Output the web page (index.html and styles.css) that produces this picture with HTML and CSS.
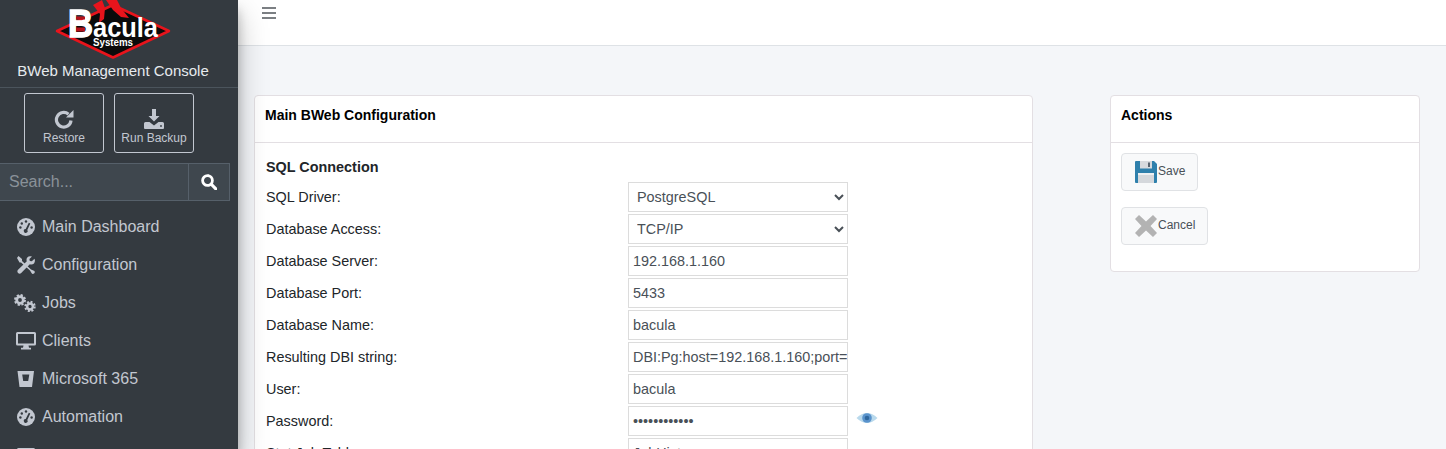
FILE: index.html
```html
<!DOCTYPE html>
<html lang="en">
<head>
<meta charset="utf-8">
<title>BWeb Management Console</title>
<link rel="stylesheet" href="styles.css">
</head>
<body>
<div class="app">
  <aside class="sidebar">
    <div class="brand">
      <svg class="logo" viewBox="0 0 116 60" width="116" height="60" aria-label="Bacula Systems">
        <path d="M2 31 L58 5 L114 31 L58 57.500 Z" fill="#0b0b0b" stroke="#e8141c" stroke-width="2.500" stroke-linejoin="round"/>
        <path d="M38 5 L47 0 L50 8 L49 19 L44 23 L45 14 Z" fill="#e8141c"/>
        <path d="M51 0 L62 0 L66 8 L74 18 L66 17 L58 10 Z" fill="#e8141c"/>
        <text class="logo-b" x="13" y="37" textLength="25" lengthAdjust="spacingAndGlyphs">B</text>
        <rect x="21" y="16.500" width="9" height="3" fill="#b3121a"/>
        <rect x="21" y="27.500" width="9" height="4" fill="#b3121a"/>
        <text class="logo-acula" x="38" y="37" textLength="65" lengthAdjust="spacingAndGlyphs">acula</text>
        <text class="logo-sys" x="38" y="46" textLength="40" lengthAdjust="spacingAndGlyphs">Systems</text>
      </svg>
      <div class="brand-title">BWeb Management Console</div>
    </div>
    <div class="quick">
      <a class="quick-btn">
        <svg class="quick-icon" viewBox="0 0 20 20" width="20" height="20"><path d="M17 11.500 A7.300 7.300 0 1 1 14.500 5.200" fill="none" stroke="#c2c7d0" stroke-width="3.200"/><path d="M19.500 1 V8.500 H12 Z" fill="#c2c7d0"/></svg>
        <span>Restore</span>
      </a>
      <a class="quick-btn">
        <svg class="quick-icon" viewBox="0 0 20 20" width="20" height="20"><path d="M8 0 H12 V7 H15.500 L10 12.500 L4.500 7 H8 Z" fill="#c2c7d0"/><path d="M0 14.500 Q0 13 1.500 13 H5.500 L10 16.500 L14.500 13 H18.500 Q20 13 20 14.500 V19 Q20 20 19 20 H1 Q0 20 0 19 Z" fill="#c2c7d0"/><circle cx="17" cy="17" r="0.900" fill="#343a40"/></svg>
        <span>Run Backup</span>
      </a>
    </div>
    <div class="search">
      <input class="search-input" type="text" placeholder="Search...">
      <button class="search-btn" type="button" aria-label="Search">
        <svg viewBox="0 0 16 16" width="16" height="16"><circle cx="6.500" cy="6.500" r="4.900" fill="none" stroke="#fff" stroke-width="2.800"/><path d="M10.200 10.200 L14.800 14.800" stroke="#fff" stroke-width="3.100" stroke-linecap="round"/></svg>
      </button>
    </div>
    <nav class="menu">
      <a class="menu-item">
        <svg class="mi" viewBox="0 0 18 18" width="18" height="18"><circle cx="9" cy="9" r="9" fill="#c2c7d0"/><g fill="#343a40"><circle cx="9" cy="3.500" r="1.200"/><circle cx="4.800" cy="5.500" r="1.200"/><circle cx="3.400" cy="9.500" r="1.200"/><circle cx="14.600" cy="9.500" r="1.200"/><path d="M11.800 4.800 L13.300 5.500 L10.300 12 A1.900 1.900 0 1 1 8.700 11.100 Z"/></g></svg>
        <span>Main Dashboard</span>
      </a>
      <a class="menu-item">
        <svg class="mi" viewBox="0 0 18 18" width="18" height="18"><g fill="#c2c7d0"><path d="M1.500 0 L5 3 V5 L14 13.500 L17.500 15 Q18.200 17 17 17.500 Q15.500 18.500 14.500 17 L13 14.500 L4 6.500 H2.500 L0 2 Z"/><path d="M17.500 2.800 L14.800 5.300 L12.800 4.900 L12.400 3 L15 0.500 Q12 -0.500 10.300 1.500 Q9 3.200 9.800 5.200 L0.800 14 Q-0.200 15.500 1 17 Q2.700 18.400 4.200 17.100 L12.800 8.200 Q15.200 9 17 7.400 Q18.600 5.500 17.500 2.800 Z"/></g></svg>
        <span>Configuration</span>
      </a>
      <a class="menu-item">
        <svg class="mi mi-jobs" viewBox="0 0 22 18" width="22" height="18"><g fill="none" stroke="#c2c7d0"><circle cx="6" cy="6" r="3.300" stroke-width="2.800"/><circle cx="6" cy="6" r="5" stroke-width="2" stroke-dasharray="2.200 1.730"/><circle cx="16" cy="12.500" r="2.900" stroke-width="2.500"/><circle cx="16" cy="12.500" r="4.700" stroke-width="2" stroke-dasharray="2 1.690"/></g></svg>
        <span>Jobs</span>
      </a>
      <a class="menu-item">
        <svg class="mi mi-clients" viewBox="0 0 20 18" width="20" height="18"><path d="M1.500 0 H18.500 Q20 0 20 1.500 V12 Q20 13.500 18.500 13.500 H12.500 L13 15.800 H15 V17.500 H5 V15.800 H7 L7.500 13.500 H1.500 Q0 13.500 0 12 V1.500 Q0 0 1.500 0 Z M2 2 V11.500 H18 V2 Z" fill="#c2c7d0" fill-rule="evenodd"/></svg>
        <span>Clients</span>
      </a>
      <a class="menu-item">
        <svg class="mi" viewBox="0 0 18 18" width="18" height="18"><path d="M0.500 1 H17 L15 17 H2.500 Z M5.200 4.500 L6.200 11 H11.200 L12.300 4.500 Z" fill="#c2c7d0" fill-rule="evenodd"/></svg>
        <span>Microsoft 365</span>
      </a>
      <a class="menu-item">
        <svg class="mi" viewBox="0 0 18 18" width="18" height="18"><circle cx="9" cy="9" r="9" fill="#c2c7d0"/><g fill="#343a40"><circle cx="9" cy="3.500" r="1.200"/><circle cx="4.800" cy="5.500" r="1.200"/><circle cx="3.400" cy="9.500" r="1.200"/><circle cx="14.600" cy="9.500" r="1.200"/><path d="M11.800 4.800 L13.300 5.500 L10.300 12 A1.900 1.900 0 1 1 8.700 11.100 Z"/></g></svg>
        <span>Automation</span>
      </a>
      <a class="menu-item">
        <svg class="mi mi-last" viewBox="0 0 18 18" width="18" height="18"><rect x="0" y="0" width="18" height="18" rx="1.500" fill="#c2c7d0"/></svg>
      </a>
    </nav>
  </aside>
  <div class="main">
    <header class="topbar">
      <svg class="burger" viewBox="0 0 14 12" width="14" height="12"><path d="M0 1 H14 M0 6 H14 M0 11 H14" stroke="#7b7f83" stroke-width="2"/></svg>
    </header>
    <div class="content">
      <section class="card card-main">
        <h2 class="card-title">Main BWeb Configuration</h2>
        <div class="card-body">
          <h3 class="section-title">SQL Connection</h3>
          <div class="row"><label>SQL Driver:</label><select class="field sel"><option>PostgreSQL</option></select></div>
          <div class="row"><label>Database Access:</label><select class="field sel"><option>TCP/IP</option></select></div>
          <div class="row"><label>Database Server:</label><input class="field" type="text" value="192.168.1.160"></div>
          <div class="row"><label>Database Port:</label><input class="field" type="text" value="5433"></div>
          <div class="row"><label>Database Name:</label><input class="field" type="text" value="bacula"></div>
          <div class="row"><label>Resulting DBI string:</label><input class="field" type="text" value="DBI:Pg:host=192.168.1.160;port=5433;dbname=bacula"></div>
          <div class="row"><label>User:</label><input class="field" type="text" value="bacula"></div>
          <div class="row"><label>Password:</label><input class="field" type="password" value="baculapasswd">
            <svg class="eye" viewBox="0 0 22 14" width="22" height="14"><path d="M0.500 7 Q11 -3 21.500 7 Q11 17 0.500 7 Z" fill="#b9d9ec"/><circle cx="11" cy="7" r="4.800" fill="#5a93cc"/><circle cx="11" cy="7" r="2.300" fill="#2f679e"/></svg>
          </div>
          <div class="row"><label>Stat Job Table:</label><input class="field" type="text" value="JobHistory"></div>
        </div>
      </section>
      <section class="card card-side">
        <h2 class="card-title">Actions</h2>
        <div class="card-body actions">
          <a class="act act-save">
            <svg viewBox="0 0 22 22" width="22" height="22"><path d="M0.500 0 H19 L22 3 V21 Q22 22 21 22 H1 Q0 22 0 21 V0.500 Z" fill="#2f80ac"/><path d="M5 0 H17 V7.500 H5 Z" fill="#d7dade"/><rect x="13" y="1.500" width="2" height="4.500" fill="#5b6570"/><path d="M3 12 H19 V22 H3 Z" fill="#d5d8dc"/><path d="M3 12 H19 V14 H3 Z" fill="#eef0f2"/></svg>
            <span>Save</span>
          </a>
          <a class="act act-cancel">
            <svg viewBox="0 0 22 22" width="22" height="22"><path d="M4 0 L11 6.500 L18 0 L22 4 L15.500 11 L22 18 L18 22 L11 15.500 L4 22 L0 18 L6.500 11 L0 4 Z" fill="#b3b3b3"/></svg>
            <span>Cancel</span>
          </a>
        </div>
      </section>
    </div>
  </div>
</div>
</body>
</html>
```

FILE: styles.css
```css
* { box-sizing: border-box; }
html, body { margin: 0; height: 100%; overflow: hidden; }
body { font-family: "Liberation Sans", Arial, sans-serif; background: #f4f6f9; color: #212529; }

.app { display: flex; height: 449px; overflow: hidden; }

.sidebar {
  flex: 0 0 238px;
  width: 238px;
  background: #343a40;
  color: #c2c7d0;
  box-shadow: 0 14px 28px rgba(0,0,0,.25), 0 10px 10px rgba(0,0,0,.22);
  z-index: 2;
  overflow: hidden;
}
.brand {
  height: 88px;
  border-bottom: 1px solid #4b545c;
  text-align: center;
  overflow: hidden;
}
.logo { display: block; margin: 0 0 0 55px; width: 116px; height: 60px; }
.logo-b { font: 700 38px "Liberation Sans", sans-serif; fill: #fff; stroke: #fff; stroke-width: 1.500px; }
.logo-acula { font: 700 28px "Liberation Sans", sans-serif; fill: #fff; }
.logo-sys { font: 700 10px "Liberation Sans", sans-serif; fill: #fff; }
.brand-title { margin-top: 1px; font-size: 15px; line-height: 20px; color: #e6eaee; white-space: nowrap; width: 226px; }

.quick { display: flex; gap: 10px; padding: 5px 0 0 24px; }
.quick-btn {
  width: 80px;
  height: 60px;
  border: 1px solid #c2c7d0;
  border-radius: 3px;
  display: flex;
  flex-direction: column;
  align-items: center;
  padding-top: 15px;
  font-size: 12px;
  line-height: 15px;
  color: #c2c7d0;
}
.quick-icon { display: block; flex: none; margin-bottom: 2px; }

.search { display: flex; width: 230px; height: 38px; margin-top: 10px; }
.search-input {
  flex: 1;
  min-width: 0;
  background: #3f474e;
  border: 1px solid #56606a;
  border-left: 0;
  color: #fff;
  font: 16px "Liberation Sans", sans-serif;
  padding: 0 9px;
  outline: none;
}
.search-input::placeholder { color: #8a9299; opacity: 1; }
.search-btn {
  width: 42px;
  background: #3f474e;
  border: 1px solid #56606a;
  margin-left: -1px;
  padding: 0;
  display: flex;
  align-items: center;
  justify-content: center;
}

.menu { display: flex; flex-direction: column; margin-top: 7px; }
.menu-item {
  flex: none;
  height: 38px;
  display: flex;
  align-items: center;
  padding-left: 17px;
  font-size: 16px;
  color: #c2c7d0;
  white-space: nowrap;
}
.mi { flex: none; margin-right: 7px; }
.mi-jobs { margin-left: -3px; margin-right: 6px; }
.mi-clients { margin-left: -1px; margin-right: 6px; }
.mi-last { margin-top: 4px; }

.main { flex: 1; min-width: 0; display: flex; flex-direction: column; }
.topbar {
  flex: 0 0 46px;
  background: #fff;
  border-bottom: 1px solid #dee2e6;
  padding: 7px 0 0 24px;
}
.burger { display: block; }

.content { display: flex; align-items: flex-start; gap: 77px; padding: 49px 26px 0 16px; }

.card {
  background: #fff;
  border: 1px solid #e3dfe3;
  border-radius: 4px;
}
.card-main { flex: 0 0 779px; }
.card-side { flex: 0 0 310px; height: 177px; }
.card-title {
  margin: 0;
  height: 47px;
  padding: 11px 10px 0;
  font-size: 14px;
  line-height: 17px;
  font-weight: 700;
  color: #000;
  border-bottom: 1px solid #e3dfe3;
}

.card-body { padding: 15px 11px 0; }
.section-title {
  margin: 0 0 5px;
  font-size: 14.400px;
  line-height: 18px;
  font-weight: 700;
  color: #212529;
}
.row { display: flex; align-items: center; height: 32px; font-size: 14.400px; color: #212529; }
.row label { flex: 0 0 362px; }
.field {
  width: 220px;
  height: 30px;
  border: 1px solid #dcdcdc;
  background: #fff;
  color: #495057;
  font: 14.400px "Liberation Sans", sans-serif;
  padding: 0 0 0 4px;
  outline: none;
  border-radius: 0;
}
.eye { margin: 0 0 6px 8px; width: 22px; height: 14px; }

.actions { display: flex; flex-direction: column; align-items: flex-start; gap: 16px; padding: 10px 10px 0; }
.act {
  height: 38px;
  display: flex;
  align-items: center;
  padding-left: 13px;
  background: #f8f9fa;
  border: 1px solid #e0e2e5;
  border-radius: 4px;
  font-size: 12px;
  color: #495057;
}
.act span { padding: 0 0 2px 1px; }
.act-save { width: 77px; }
.act-cancel { width: 87px; }
```
